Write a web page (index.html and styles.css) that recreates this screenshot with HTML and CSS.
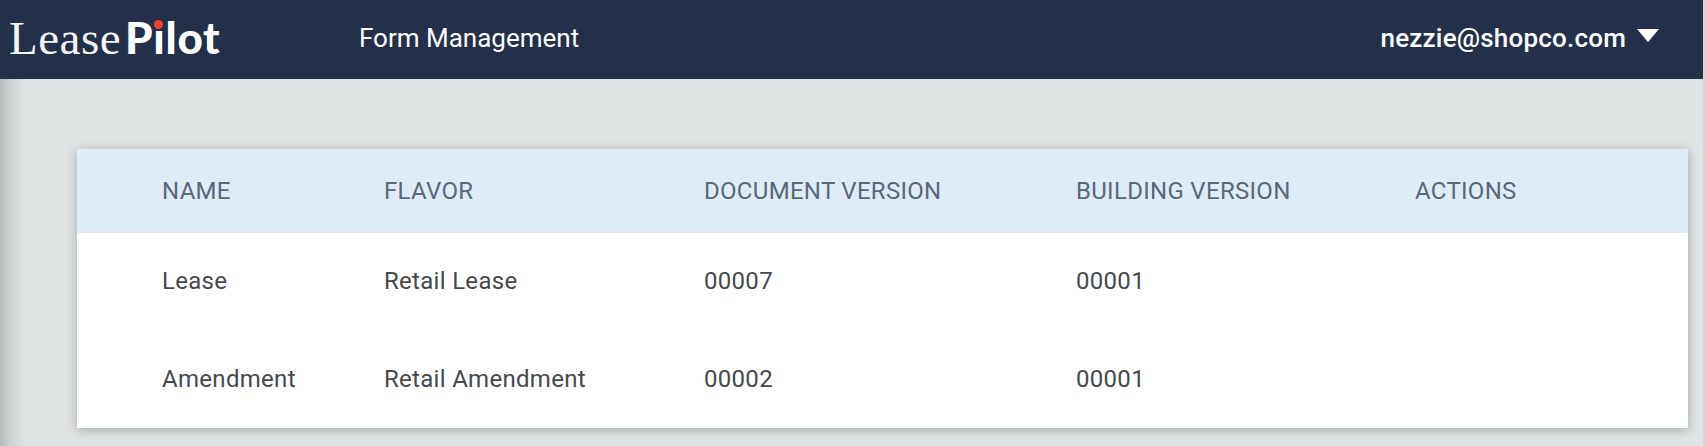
FILE: index.html
```html
<!DOCTYPE html>
<html lang="en">
<head>
    <meta charset="UTF-8">
    <title>LeasePilot - Form Management</title>
    <link rel="stylesheet" href="styles.css">
</head>
<body>
    <header class="navbar">
        <div class="logo">
            <span class="logo-lease">Lease</span>
            <span class="logo-pilot">P<span class="logo-i">ı<span class="logo-dot"></span></span>lot</span>
        </div>
        <div class="nav-title">Form Management</div>
        <div class="user-menu">
            <span>nezzie@shopco.com</span>
            <span class="caret"></span>
        </div>
    </header>
    <main class="content">
        <table class="forms-table">
            <thead>
                <tr>
                    <th class="col-name">Name</th>
                    <th class="col-flavor">Flavor</th>
                    <th class="col-doc">Document Version</th>
                    <th class="col-building">Building Version</th>
                    <th>Actions</th>
                </tr>
            </thead>
            <tbody>
                <tr>
                    <td>Lease</td>
                    <td>Retail Lease</td>
                    <td>00007</td>
                    <td>00001</td>
                    <td></td>
                </tr>
                <tr>
                    <td>Amendment</td>
                    <td>Retail Amendment</td>
                    <td>00002</td>
                    <td>00001</td>
                    <td></td>
                </tr>
            </tbody>
        </table>
    </main>
</body>
</html>
```

FILE: styles.css
```css
html, body {
    height: 100%;
}

body {
    margin: 0;
    background: #d4d6d6;
    font-family: Roboto, "Liberation Sans", sans-serif;
    overflow: hidden;
    position: relative;
}

.navbar {
    display: flex;
    align-items: center;
    height: 79px;
    margin-right: 3px;
    background: #243049;
    color: #fff;
    position: relative;
    z-index: 1;
}

.logo {
    display: flex;
    align-items: baseline;
    width: 359px;
    margin-bottom: 4px;
    padding-left: 9px;
    box-sizing: border-box;
    white-space: nowrap;
    color: #f4f4f4;
}

.logo-lease {
    font-family: "Liberation Serif", serif;
    font-size: 47px;
    letter-spacing: 0.5px;
}

.logo-pilot {
    margin-left: 4px;
    font-family: Lato, sans-serif;
    font-size: 44px;
    font-weight: 900;
    letter-spacing: 0.7px;
    color: #fff;
}

.logo-i {
    position: relative;
}

.logo-dot {
    position: absolute;
    left: 50%;
    top: 9px;
    width: 9px;
    height: 9px;
    margin-left: -5px;
    border-radius: 50%;
    background: #f0412b;
}

.nav-title {
    margin-bottom: 4px;
    font-size: 26px;
}

.user-menu {
    display: flex;
    align-items: center;
    gap: 11px;
    margin-left: auto;
    padding-right: 44px;
    margin-bottom: 4px;
    font-size: 26px;
    font-weight: 500;
    letter-spacing: 0.2px;
}

.caret {
    width: 0;
    height: 0;
    margin-bottom: 5px;
    border-left: 11px solid transparent;
    border-right: 11px solid transparent;
    border-top: 13px solid #fff;
}

.content {
    height: calc(100% - 79px);
    margin-right: 3px;
    padding: 70px 15px 0 77px;
    box-sizing: border-box;
    background: #dfe3e4;
    position: relative;
}

/* shadow of the collapsed side panel */
.content::before {
    content: "";
    position: absolute;
    left: 0;
    top: 0;
    bottom: 0;
    width: 26px;
    background: linear-gradient(to right, #b7bbbc, #cfd3d4 40%, #dfe3e4);
}

.forms-table {
    width: 100%;
    border-collapse: collapse;
    table-layout: fixed;
    background: #fff;
    box-shadow: 0 2px 10px rgba(0, 0, 0, 0.25);
    position: relative;
    font-size: 24px;
    letter-spacing: 0.3px;
}

.forms-table th {
    height: 83px;
    padding: 2px 0 0 85px;
    background: #dfecf5;
    border-bottom: 1px solid #e3ebf1;
    color: #5a6779;
    font-weight: 400;
    text-align: left;
    text-transform: uppercase;
    box-sizing: border-box;
}

.forms-table td {
    height: 98px;
    padding: 0 0 0 85px;
    color: #47494c;
    box-sizing: border-box;
}

.forms-table th ~ th,
.forms-table td ~ td {
    padding-left: 0;
}

.col-name {
    width: 307px;
}

.col-flavor {
    width: 320px;
}

.col-doc {
    width: 372px;
}

.col-building {
    width: 339px;
}
```
